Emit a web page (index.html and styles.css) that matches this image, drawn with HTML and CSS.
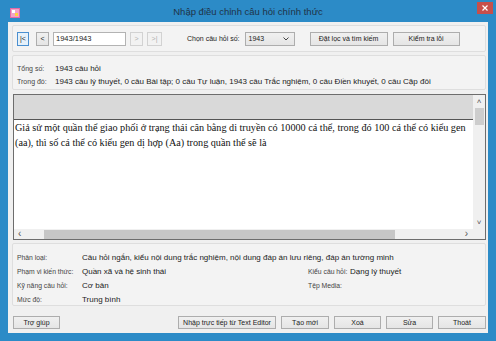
FILE: index.html
```html
<!DOCTYPE html>
<html lang="vi">

<head>
    <meta charset="UTF-8">
    <title>Nhập điều chỉnh câu hỏi chính thức</title>
    <link rel="stylesheet" href="styles.css">
</head>

<body>
    <div class="window">
        <!-- thanh tiêu đề -->
        <div class="titlebar">
            <svg class="app-icon" width="10" height="10" viewBox="0 0 10 10">
                <rect width="10" height="10" fill="#e46aa6" />
                <rect x="1" y="1" width="8" height="8" fill="#f3a3c8" />
                <rect x="2" y="2" width="3" height="3" fill="#fff" />
                <rect x="5" y="5" width="3" height="3" fill="#ffd23c" />
            </svg>
            <span class="title">Nhập điều chỉnh câu hỏi chính thức</span>
            <div class="close">
                <svg width="6" height="6" viewBox="0 0 6 6">
                    <path d="M0.5 0.5 L5.5 5.5 M5.5 0.5 L0.5 5.5" stroke="#fff" stroke-width="1.2" />
                </svg>
            </div>
        </div>

        <div class="client">
            <!-- thanh điều hướng -->
            <div class="panel toolbar">
                <button class="btn nav active">|&lt;</button>
                <button class="btn nav prev">&lt;</button>
                <input class="txt" type="text" value="1943/1943">
                <button class="btn nav off">&gt;</button>
                <button class="btn nav off last">&gt;|</button>
                <span class="lbl-choose">Chọn câu hỏi số:</span>
                <div class="select">
                    <span>1943</span>
                    <svg width="6" height="4" viewBox="0 0 6 4">
                        <path d="M0.5 0.5 L3 3 L5.5 0.5" fill="none" stroke="#444" stroke-width="1" />
                    </svg>
                </div>
                <button class="btn filter">Đặt lọc và tìm kiếm</button>
                <button class="btn check">Kiểm tra lỗi</button>
            </div>

            <!-- tổng số -->
            <div class="panel summary">
                <div class="row"><span class="k">Tổng số:</span><span class="v">1943 câu hỏi</span></div>
                <div class="row"><span class="k">Trong đó:</span><span class="v">1943 câu lý thuyết, 0 câu Bài tập; 0 câu Tự luận, 1943 câu Trắc nghiệm, 0 câu Điền khuyết, 0 câu Cặp đôi</span></div>
            </div>

            <!-- nội dung câu hỏi -->
            <div class="editor">
                <div class="doc">
                    <div class="band"></div>
                    <p class="text">Giả sử một quần thể giao phối ở trạng thái cân bằng di truyền có 10000 cá thể, trong đó 100 cá thể có kiểu gen<br>(aa), thì số cá thể có kiểu gen dị hợp (Aa) trong quần thể sẽ là</p>
                </div>
                <div class="vscroll">
                    <span class="arr">&#708;</span>
                    <div class="vthumb"></div>
                    <span class="arr down">&#709;</span>
                </div>
                <div class="hscroll">
                    <span class="arr">&lsaquo;</span>
                    <div class="hthumb"></div>
                    <span class="arr right">&rsaquo;</span>
                </div>
                <div class="corner"></div>
            </div>

            <!-- thông tin phân loại -->
            <div class="panel details">
                <span class="k">Phân loại:</span>
                <span class="v wide">Câu hỏi ngắn, kiểu nội dung trắc nghiệm, nội dung đáp án lưu riêng, đáp án tường minh</span>
                <span class="k">Phạm vi kiến thức:</span>
                <span class="v">Quần xã và hệ sinh thái</span>
                <span class="k">Kiểu câu hỏi:</span>
                <span class="v">Dạng lý thuyết</span>
                <span class="k">Kỹ năng câu hỏi:</span>
                <span class="v">Cơ bản</span>
                <span class="k">Tệp Media:</span>
                <span class="v"></span>
                <span class="k">Mức độ:</span>
                <span class="v wide">Trung bình</span>
            </div>

            <!-- các nút -->
            <div class="actions">
                <button class="btn help">Trợ giúp</button>
                <button class="btn editor-btn">Nhập trực tiếp từ Text Editor</button>
                <button class="btn w48">Tạo mới</button>
                <button class="btn w47">Xoá</button>
                <button class="btn w47">Sửa</button>
                <button class="btn w48">Thoát</button>
            </div>
        </div>
    </div>
</body>

</html>
```

FILE: styles.css
```css
* {
    box-sizing: border-box;
}

body,
button,
p {
    margin: 0;
    padding: 0;
}

body {
    font-family: 'Liberation Sans', Arial, sans-serif;
    font-size: 7px;
    color: #333;
    background: #fff;
}

.window {
    width: 496px;
    height: 341px;
    background: #2c8bc7;
    padding: 0 8px 8px 8px;
    display: flex;
    flex-direction: column;
}

/* thanh tiêu đề */
.titlebar {
    height: 22px;
    display: flex;
    align-items: center;
    position: relative;
}

.app-icon {
    margin-left: 2px;
    margin-top: 3px;
}

.title {
    flex: 1;
    text-align: center;
    font-size: 9.5px;
    color: #1f3347;
    margin-right: 12px;
}

.close {
    position: absolute;
    right: -5px;
    top: 2px;
    width: 16px;
    height: 12px;
    background: #c74f4b;
    display: flex;
    align-items: center;
    justify-content: center;
}

.client {
    flex: 1;
    background: #f0f0f0;
    padding: 0 2px 0 4px;
    display: flex;
    flex-direction: column;
}

.panel {
    border: 1px solid #dedede;
    border-radius: 2px;
    background: #f3f3f3;
}

/* nút kiểu Windows 8 */
.btn {
    font-family: inherit;
    font-size: 7px;
    color: #222;
    height: 14px;
    border: 1px solid #adadad;
    background: linear-gradient(#f0f0f0, #e5e5e5);
    display: flex;
    align-items: center;
    justify-content: center;
    white-space: nowrap;
}

.toolbar {
    margin-top: 3px;
    height: 27px;
    display: flex;
    align-items: center;
    padding-left: 4px;
}

.nav {
    width: 13px;
}

.nav.active {
    width: 12px;
    border-color: #4a8fd0;
    background: #e5f1fb;
}

.nav.prev {
    margin-left: 7px;
}

.nav.off {
    color: #b0b0b0;
    border-color: #d2d2d2;
    background: #f2f2f2;
    margin-left: 4px;
}

.nav.last {
    width: 15px;
}

.txt {
    width: 73px;
    height: 14px;
    margin-left: 4px;
    border: 1px solid #b3b3b3;
    background: #fff;
    font-family: inherit;
    font-size: 7.5px;
    color: #222;
    padding: 0 2px;
}

.lbl-choose {
    margin-left: 25px;
    color: #222;
}

.select {
    width: 50px;
    height: 14px;
    margin-left: 5px;
    border: 1px solid #adadad;
    background: linear-gradient(#f0f0f0, #e5e5e5);
    display: flex;
    align-items: center;
    justify-content: space-between;
    padding: 0 5px 0 3px;
    color: #222;
}

.filter {
    width: 78px;
    margin-left: 15px;
}

.check {
    width: 67px;
    margin-left: 5px;
}

.summary {
    margin-top: 3px;
    height: 35px;
    padding: 6px 0 0 4px;
}

.row {
    height: 13px;
    display: flex;
    align-items: center;
}

.row .k {
    width: 38px;
}

.k {
    color: #444;
    white-space: nowrap;
}

.v {
    font-size: 8px;
    color: #222;
    white-space: nowrap;
}

/* khung soạn thảo */
.editor {
    margin-top: 4px;
    margin-left: 1px;
    height: 146px;
    border: 1px solid #6d6d6d;
    background: #fff;
    display: grid;
    grid-template-columns: 1fr 12px;
    grid-template-rows: 1fr 10px;
}

.doc {
    overflow: hidden;
}

.band {
    height: 25px;
    background: #d9d9d9;
    border-bottom: 1px solid #555;
}

.text {
    font-family: 'Liberation Serif', 'Times New Roman', serif;
    font-size: 10.2px;
    line-height: 15px;
    color: #111;
    white-space: nowrap;
    padding-left: 1px;
}

.vscroll {
    background: #f0f0f0;
    display: flex;
    flex-direction: column;
    align-items: center;
}

.arr {
    font-size: 8px;
    color: #555;
    height: 13px;
    line-height: 13px;
}

.vthumb {
    width: 9px;
    height: 17px;
    background: #cdcdcd;
}

.vscroll .down {
    margin-top: auto;
}

.hscroll {
    background: #f0f0f0;
    display: flex;
    align-items: center;
    padding: 0 4px;
}

.hscroll .arr {
    font-size: 10px;
    line-height: 10px;
    height: 10px;
}

.hthumb {
    height: 9px;
    width: 351px;
    margin-left: 23px;
    background: #c6c6c6;
}

.hscroll .right {
    margin-left: auto;
    margin-right: 1px;
}

.corner {
    background: #f0f0f0;
}

/* thông tin phân loại */
.details {
    margin-top: 3px;
    height: 63px;
    padding: 6px 0 0 4px;
    display: grid;
    grid-template-columns: 65px 226px 42px 1fr;
    grid-auto-rows: 14px;
    align-items: center;
}

.details .k {
    font-size: 6.8px;
}

.details .wide {
    grid-column: 2 / 5;
}

.actions {
    margin-top: 10px;
    display: flex;
    gap: 5px;
}

.actions .btn {
    height: 13px;
}

.help {
    width: 47px;
    margin-left: 1px;
}

.editor-btn {
    width: 98px;
    margin-left: auto;
}

.w48 {
    width: 48px;
}

.w47 {
    width: 47px;
}
```
